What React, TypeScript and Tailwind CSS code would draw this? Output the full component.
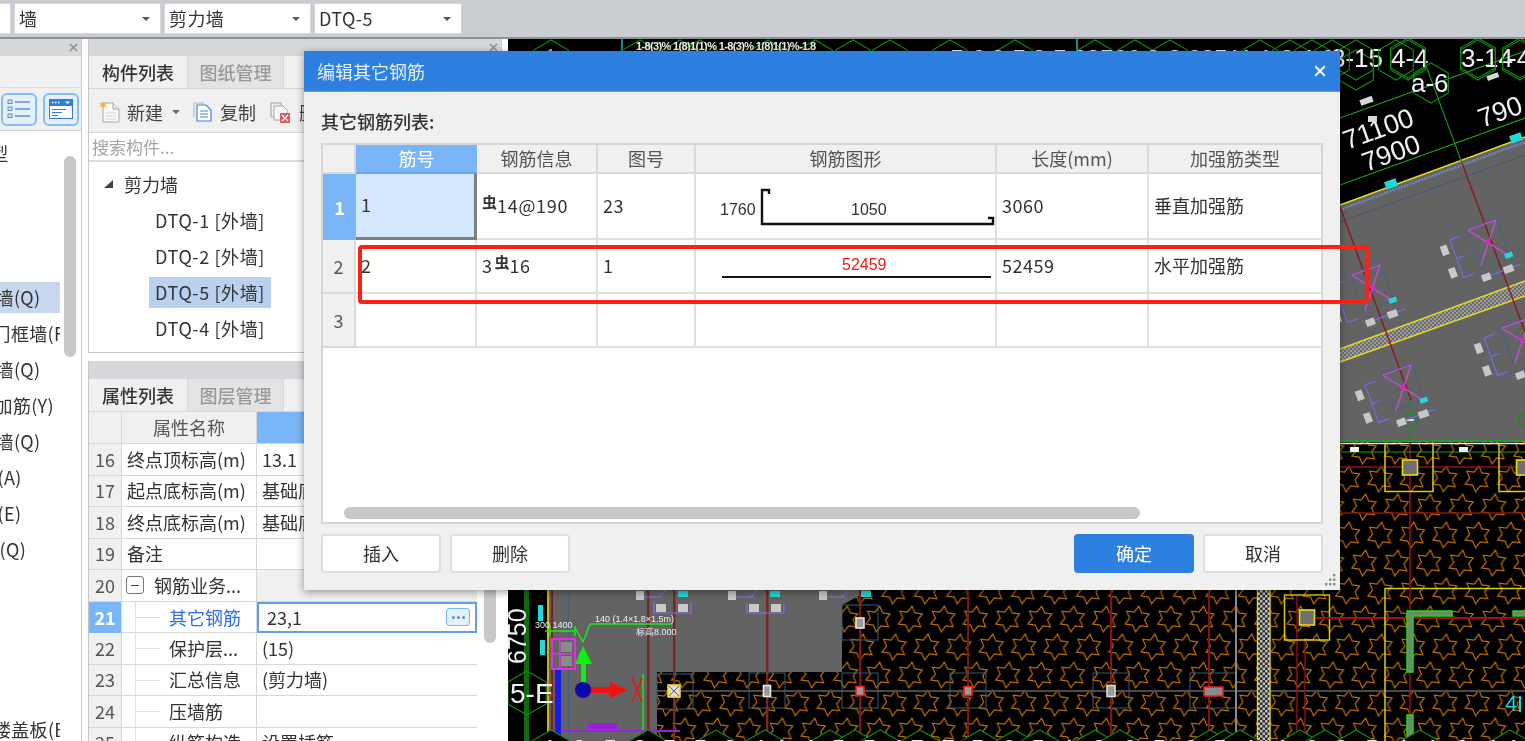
import React from "react";

const font = { fontFamily: '"Noto Sans CJK SC", "Noto Sans", sans-serif' };

function hexPts(cx: number, cy: number, r: number) {
  const pts: string[] = [];
  for (let i = 0; i < 6; i++) {
    const a = (Math.PI / 3) * i + Math.PI / 6;
    pts.push(`${cx + r * Math.cos(a)},${cy + r * Math.sin(a)}`);
  }
  return pts.join(" ");
}

function starPts(cx: number, cy: number, R: number, r: number) {
  const pts: string[] = [];
  for (let i = 0; i < 12; i++) {
    const a = (Math.PI / 6) * i - Math.PI / 2 + 0.12;
    const d = i % 2 === 0 ? R : r;
    pts.push(`${(cx + d * Math.cos(a)).toFixed(1)},${(cy + d * Math.sin(a)).toFixed(1)}`);
  }
  return pts.join(" ");
}

function Brace({ x, y }: { x: number; y: number }) {
  return (
    <g transform={`translate(${x} ${y}) rotate(-20)`}>
      <rect x={-16} y={-19} width={32} height={38} fill="none" stroke="#47627f" strokeWidth={1} />
      <path d="M-15 -18 L15 -18 L-15 20 M-15 -18 L15 20" fill="none" stroke="#c24fd6" strokeWidth={1.3} />
      <circle cx={0} cy={0} r={2.5} fill="#e020d0" />
      <path d="M-24 -15 L-35 -15 L-35 25 L-24 25 M-35 5 L-26 5" fill="none" stroke="#6d6de0" strokeWidth={1.3} />
      <path d="M-20 32 L24 32" fill="none" stroke="#6d6de0" strokeWidth={1.3} />
      <rect x={-47} y={-12} width={7} height={10} fill="#c8c8c8" />
      <rect x={-47} y={12} width={7} height={10} fill="#c8c8c8" />
      <rect x={-18} y={29} width={9} height={7} fill="#c8c8c8" />
      <rect x={5} y={29} width={10} height={7} fill="#c8c8c8" />
      <rect x={11} y={17} width={8} height={5} fill="#25d8d8" />
    </g>
  );
}

function ColBox({ x, y, inner, w = 9, h = 11 }: { x: number; y: number; inner: string; w?: number; h?: number }) {
  return (
    <g>
      <rect x={x - 18} y={y - 18} width={36} height={35} fill="none" stroke="#3a5a78" strokeWidth={1} />
      <rect x={x - w / 2} y={y - h / 2} width={w} height={h} fill="#9a9a9a" stroke={inner} strokeWidth={1.6} />
    </g>
  );
}

function Canvas() {
  const topHex = [551, 640, 680, 700, 768, 815, 853, 890, 950, 1015, 1095, 1135, 1170, 1260, 1290, 1312, 1332, 1356, 1408, 1396, 1478, 1520];
  const botHex = [551, 648, 716, 765, 830, 855, 880, 920, 980, 1015, 1040, 1095, 1120, 1210, 1225, 1240, 1300, 1325, 1356, 1420, 1510];
  return (
    <svg viewBox="508 39 1017 702" className="block w-full h-full">
      <defs>
        <pattern id="stars" patternUnits="userSpaceOnUse" x={1364} y={521} width={32.4} height={56}>
          {[[16, 14], [0, 42], [32.4, 42]].map(([a, b], i) => (
            <polygon key={i} points={starPts(a, b, 13, 7.6)} fill="none" stroke="#c06e00" strokeWidth={1.2} />
          ))}
        </pattern>
        <pattern id="check" patternUnits="userSpaceOnUse" width={5} height={5}>
          <rect width={5} height={5} fill="#2a2a2a" />
          <rect width={2.5} height={2.5} fill="#c0c0c0" />
          <rect x={2.5} y={2.5} width={2.5} height={2.5} fill="#c0c0c0" />
        </pattern>
        <pattern id="band" patternUnits="userSpaceOnUse" width={4} height={4}>
          <rect width={4} height={4} fill="#6c6c6c" />
          <rect width={2} height={2} fill="#9c9c9c" />
          <rect x={2} y={2} width={2} height={2} fill="#9c9c9c" />
        </pattern>
      </defs>
      <rect x={508} y={39} width={1017} height={702} fill="#000" />

      {/* star fill */}
      <rect x={842} y={440} width={683} height={301} fill="url(#stars)" />
      <rect x={657} y={672} width={185} height={69} fill="url(#stars)" />

      {/* gray slab, lower left */}
      <path d="M549 580 L842 580 L842 672 L657 672 L657 741 L549 741 Z" fill="#636363" />
      <path d="M842 605 L842 590 L870 590 Z" fill="#636363" />

      {/* gray slab, upper right */}
      <path d="M1340 205 L1525 137 L1525 441 L1340 441 Z" fill="#636363" />
      <path d="M1340 349 L1525 281 L1525 296 L1340 362 Z" fill="url(#band)" />
      <path d="M1340 349 L1525 281 M1340 362 L1525 296" stroke="#e6d820" strokeWidth={1.5} fill="none" />
      <path d="M1340 205 L1525 137" stroke="#e6d820" strokeWidth={1.6} fill="none" />
      <path d="M1342 209 L1525 142" stroke="#6f86b8" strokeWidth={2.4} strokeDasharray="2 1" fill="none" />
      <path d="M1340 222 L1525 155" stroke="#3d5878" strokeWidth={1} fill="none" />

      {/* dimension lines and top right text */}
      <path d="M1340 118 L1525 51 M1340 185 L1525 118" stroke="#1f9a1f" strokeWidth={1.2} fill="none" />
      <path d="M1425 63 L1462 163" stroke="#1f8a1f" strokeWidth={1.2} fill="none" />
      <path d="M1462 163 L1525 332 M1340 207 L1411 400" stroke="#8c1c1c" strokeWidth={1.5} fill="none" />
      <path d="M1410 400 L1410 441" stroke="#1f8a1f" strokeWidth={1.2} fill="none" />
      <circle cx={1410} cy={420} r={6.5} fill="#636363" stroke="#1f8a1f" strokeWidth={1.6} />
      <rect x={1406} y={419} width={8} height={2} fill="#ddd" />
      <circle cx={1525} cy={420} r={6.5} fill="none" stroke="#1f8a1f" strokeWidth={1.6} />
      <polyline points="1340,441 1525,441" stroke="#2a9a2a" strokeWidth={2} fill="none" />
      <polyline points="1340,443.5 1525,443.5" stroke="#e8e8e8" strokeWidth={1.5} fill="none" />

      <Brace x={1488} y={242} />
      <Brace x={1372} y={287} />
      <Brace x={1403} y={387} />
      <Brace x={1522} y={340} />

      <rect x={1385} y={180} width={12} height={8} fill="#20d8d8" transform="rotate(-20 1391 184)" />
      <rect x={1510} y={134} width={12} height={8} fill="#20d8d8" transform="rotate(-20 1516 138)" />

      {[[1356, 70], [1408, 58], [1478, 58], [1520, 58], [1431, 83]].map(([x, y], i) => (
        <polygon key={i} points={hexPts(x, y, 20)} fill="none" stroke="#0f8a0f" strokeWidth={1.2} />
      ))}
      <g fill="#f2f2f2" style={{ fontFamily: '"Liberation Sans", sans-serif' }} fontSize={26}>
        <text x={1331} y={67}>3-15</text>
        <text x={1391} y={67}>4-4</text>
        <text x={1461} y={67}>3-14</text>
        <text x={1508} y={67}>-4</text>
        <text x={1411} y={92}>a-6</text>
        <text x={1347} y={150} transform="rotate(-20 1347 150)" fontSize={27}>71100</text>
        <text x={1366} y={172} transform="rotate(-20 1366 172)" fontSize={27}>7900</text>
        <text x={1482} y={128} transform="rotate(-20 1482 128)" fontSize={27}>790</text>
      </g>
      <g fill="#d8d8d8">
        <rect x={1360} y={98} width={13} height={6} transform="rotate(-20 1366 101)" />
        <rect x={1368} y={116} width={9} height={6} />
        <rect x={1487} y={74} width={12} height={5} transform="rotate(-20 1493 77)" />
      </g>

      {/* top strip */}
      <rect x={621} y={39} width={2} height={14} fill="#168f96" />
      <rect x={1076} y={39} width={2} height={14} fill="#168f96" />
      {topHex.map((x, i) => (
        <polygon key={i} points={hexPts(x, 60, 20)} fill="none" stroke="#0f8a0f" strokeWidth={1.2} />
      ))}
      <text x={636} y={50} fill="#f0f0f0" fontSize={11} fontWeight={700} style={{ fontFamily: '"Liberation Sans", sans-serif' }} textLength={180}>
        1-8(3)% 1(8)1(1)% 1-8(3)% 1(8)1(1)%-1.8
      </text>
      <text x={547} y={59} fill="#ddd" fontSize={14} style={{ fontFamily: '"Liberation Sans", sans-serif' }}>1</text>
      <text x={950} y={68} fill="#eee" fontSize={26} style={{ fontFamily: '"Liberation Sans", sans-serif' }} textLength={385}>
        5-6 3-5 2-5 63566 3-2 63511 1-3 4-6
      </text>

      {/* lower left */}
      <rect x={524} y={560} width={5} height={181} fill="#0d6a0d" />
      <rect x={547} y={560} width={2} height={181} fill="#c4b41c" />
      <rect x={551} y={580} width={2} height={161} fill="#7c2020" />
      <rect x={568} y={580} width={1} height={161} fill="#43617f" />
      {[648, 674, 767, 860].map((x) => (
        <rect key={x} x={x - 1} y={580} width={2.4} height={161} fill="#7c2525" />
      ))}
      <rect x={552} y={639} width={23} height={30} fill="none" stroke="#e030e0" strokeWidth={2} />
      <rect x={559} y={639} width={1.6} height={30} fill="#e030e0" />
      <rect x={552} y={653} width={23} height={1.6} fill="#e030e0" />
      <rect x={561} y={642} width={11} height={10} fill="#8a8a8a" />
      <rect x={561} y={656} width={11} height={10} fill="#8a8a8a" />
      <rect x={555} y={670} width={6} height={71} fill="#1a1ae6" />
      <path d="M545 631 L575 631 M550 626 L550 636 M575 626 L575 636 M583 642 L575 628 M583 642 L590 624 L672 624" stroke="#1ee61e" strokeWidth={1.5} fill="none" />
      <path d="M643 674 L643 733" stroke="#1ee61e" strokeWidth={1.5} fill="none" />
      <rect x={581} y={660} width={5} height={25} fill="#10f010" />
      <polygon points="583,646 575,664 592,664" fill="#10f010" />
      <rect x={590} y={687} width={22} height={6} fill="#f01010" />
      <polygon points="628,690 610,682 610,698" fill="#f01010" />
      <circle cx={583} cy={690} r={8} fill="#0a0aa8" />
      <path d="M632 678 L642 702 M642 678 L632 702" stroke="#f01010" strokeWidth={1.5} fill="none" />
      <path d="M562 731 L680 731" stroke="#9a20d8" strokeWidth={1.8} fill="none" />
      <rect x={588} y={723} width={29} height={6} fill="#9a20d8" />
      <polygon points={hexPts(527, 693, 22)} fill="none" stroke="#0f8a0f" strokeWidth={1.2} />
      <g fill="#f0f0f0" style={{ fontFamily: '"Liberation Sans", sans-serif' }}>
        <text x={510} y={703} fontSize={28}>5-E</text>
        <text x={526} y={664} fontSize={25} transform="rotate(-90 526 664)">6750</text>
        <text x={535} y={628} fontSize={9}>300 1400</text>
        <text x={595} y={622} fontSize={9}>140 (1.4×1.8×1.5m)</text>
        <text x={636} y={635} fontSize={9}>标高8.000</text>
      </g>
      <rect x={538} y={605} width={5} height={16} fill="#20d8d8" />
      <rect x={540} y={640} width={5} height={15} fill="#20d8d8" />
      <path d="M548 682 L556 682 M548 695 L556 695" stroke="#f02020" strokeWidth={1} />

      {/* small brace fragments under dialog */}
      {[640, 732, 823].map((x) => (
        <g key={x}>
          <rect x={x - 4} y={591} width={8} height={9} fill="#c8c8c8" />
          <path d={`M${x + 4} 597 L${x + 22} 597 M${x + 18} 597 L${x + 26} 590`} stroke="#8a70e0" strokeWidth={1} fill="none" />
          <rect x={x + 38} y={591} width={10} height={6} fill="#25d8d8" />
        </g>
      ))}
      {[654, 747].map((x) => (
        <g key={x}>
          <path d={`M${x} 613 L${x + 37} 613 M${x} 603 L${x} 613 M${x + 37} 603 L${x + 37} 613`} stroke="#8a70e0" strokeWidth={1.2} fill="none" />
          <rect x={x + 2} y={604} width={10} height={8} fill="#c8c8c8" />
          <rect x={x + 24} y={604} width={10} height={8} fill="#c8c8c8" />
        </g>
      ))}

      {/* column boxes */}
      <path d="M657 691 L1525 691" stroke="#4a4a4a" strokeWidth={2} fill="none" />
      <rect x={859} y={590} width={2} height={151} fill="#7c1515" />
      <rect x={967} y={590} width={2} height={151} fill="#7c1515" />
      <rect x={1110} y={590} width={2} height={151} fill="#8c1010" />
      <rect x={1208} y={590} width={2} height={151} fill="#8c1010" />
      <g>
        <rect x={657} y={674} width={36} height={35} fill="none" stroke="#3a5a78" />
        <rect x={668} y={685} width={12} height={12} fill="#ddd" stroke="#e6e020" strokeWidth={1.6} />
        <path d="M669 686 L679 696 M679 686 L669 696" stroke="#666" strokeWidth={1} />
      </g>
      <ColBox x={767} y={691} inner="#e8e8e8" w={7} h={11} />
      <ColBox x={860} y={691} inner="#ee1c1c" w={8} h={9} />
      <ColBox x={968} y={691} inner="#ee1c1c" w={8} h={9} />
      <ColBox x={860} y={623} inner="#e8e8e8" w={8} h={10} />
      <ColBox x={1111} y={691} inner="#dcdcdc" w={8} h={11} />
      <rect x={1190} y={673} width={46} height={35} fill="none" stroke="#3a5a78" />
      <rect x={1204} y={687} width={19} height={9} fill="#8a8a8a" stroke="#ee1c1c" strokeWidth={1.5} />
      <rect x={1235} y={590} width={2} height={151} fill="#8a8a8a" />

      {/* hatched wall */}
      <rect x={1258} y={590} width={12} height={151} fill="url(#check)" />
      <path d="M1257.5 590 L1257.5 741 M1270 590 L1270 741" stroke="#e6d820" strokeWidth={1.4} fill="none" />

      {/* yellow boxes and reinforcement */}
      <path d="M1297 595 L1297 741 M1305 640 L1305 741" stroke="#8c1010" strokeWidth={1.5} fill="none" />
      <rect x={1284.5} y={595} width={45} height={45} fill="none" stroke="#d8cc10" strokeWidth={1.5} />
      <rect x={1299.5} y={610} width={15} height={15} fill="#707070" stroke="#e6e010" strokeWidth={1.6} />
      <path d="M1315 618 L1525 618" stroke="#a01010" strokeWidth={2} fill="none" />
      <path d="M1385 741 L1385 588.5 L1525 588.5" stroke="#d8d010" strokeWidth={1.5} fill="none" />
      <path d="M1410 443 L1410 741" stroke="#9a1010" strokeWidth={1.5} fill="none" />
      <path d="M1407 672 L1407 611 L1452 611 L1452 616 L1413 616 L1413 672 Z" fill="#6a8a6a" stroke="#18e018" strokeWidth={1.4} />
      <rect x={1513} y={611} width={14} height={5} fill="#6a8a6a" stroke="#18e018" strokeWidth={1.4} />
      <rect x={1407} y={715} width={6} height={28} fill="#6a8a6a" stroke="#18e018" strokeWidth={1.4} />
      <text x={1505} y={711} fill="#10d8e8" fontSize={22} style={{ fontFamily: '"Liberation Sans", sans-serif' }}>4</text>
      <rect x={1519} y={696} width={2} height={16} fill="#10d8e8" />

      <path d="M1340 452 L1525 452" stroke="#1c9a1c" strokeWidth={1.2} fill="none" />
      <path d="M1340 467 L1525 467 M1340 513 L1525 513" stroke="#8c1010" strokeWidth={1.4} fill="none" />
      <rect x={1350} y={447} width={9} height={5} fill="#eee" />
      <rect x={1459} y={447} width={9} height={5} fill="#eee" />
      <path d="M1385 444 L1385 491.5 L1433 491.5 L1433 444 M1499 444 L1499 491.5 L1525 491.5" stroke="#d8d010" strokeWidth={1.5} fill="none" />
      <rect x={1402.5} y={460} width={15} height={15} fill="#707070" stroke="#e6e010" strokeWidth={1.6} />
      <rect x={1516.5} y={460} width={15} height={15} fill="#707070" stroke="#e6e010" strokeWidth={1.6} />

      {/* bottom strip */}
      {botHex.map((x, i) => (
        <polygon key={i} points={hexPts(x, 752, 22)} fill="#000" stroke="#0f8a0f" strokeWidth={1.2} />
      ))}
      <text x={543} y={757} fill="#eee" fontSize={24} style={{ fontFamily: '"Liberation Sans", sans-serif' }} textLength={975}>
        1 2-5 3 5-5 3-14 4 5-5 17-7 5-6 5-1 3-6 5-6 5-1 4-6 3-5 4-1 3-14
      </text>
    </svg>
  );
}

function CloseX({ className }: { className: string }) {
  return (
    <svg viewBox="0 0 10 10" className={className}>
      <path d="M1 1 L9 9 M9 1 L1 9" stroke="currentColor" strokeWidth={1.6} fill="none" />
    </svg>
  );
}

function PanelHeader() {
  return (
    <div className="h-[17px] bg-[#d6d7da] flex items-center justify-end pr-[3px] text-[#8d8d8d] shrink-0">
      <CloseX className="w-[9px] h-[9px]" />
    </div>
  );
}

function Combo({ w, text }: { w: string; text: string }) {
  return (
    <div className={`${w} h-[31px] bg-white border border-[#d4d6da] flex items-center pl-[4px] pr-[10px] justify-between text-[#333] text-[18px] tracking-[0.4px] shrink-0`}>
      <span>{text}</span>
      <span className="w-0 h-0 border-x-[4px] border-x-transparent border-t-[4px] border-t-[#555]" />
    </div>
  );
}

const leftList: [string, string][] = [
  ["墙型", "-ml-[28px]"],
  ["", ""],
  ["", ""],
  ["", ""],
  ["剪力墙(Q)", "-ml-[41px]"],
  ["人防门框墙(F)", "-ml-[44px]"],
  ["砌体墙(Q)", "-ml-[41px]"],
  ["砌体加筋(Y)", "-ml-[42px]"],
  ["保温墙(Q)", "-ml-[41px]"],
  ["暗梁(A)", "-ml-[39px]"],
  ["飘窗(E)", "-ml-[39px]"],
  ["幕墙(Q)", "-ml-[37px]"],
  ["", ""],
  ["", ""],
  ["", ""],
  ["", ""],
  ["楼盖板(B)", "-ml-[7px]"],
];

function LeftPanel() {
  return (
    <div className="w-[82px] shrink-0 flex flex-col border-r border-[#c8c8c8] bg-white">
      <PanelHeader />
      <div className="h-[32px] bg-[#f0f0f0] border-b border-[#dcdcdc] shrink-0" />
      <div className="h-[43px] bg-[#f0f0f0] border-b border-[#d4d4d4] flex items-center gap-[6px] pl-[1px] shrink-0">
        <div className="w-[36px] h-[33px] rounded-[6px] border-2 border-[#86bdf6] bg-[#e6f0fb] flex items-center justify-center">
          <svg viewBox="0 0 26 22" className="w-[26px] h-[22px]">
            <g fill="#cfe3f8" stroke="#5a8fd0" strokeWidth={1}>
              <rect x={2} y={2} width={4} height={3.5} />
              <rect x={2} y={9} width={4} height={3.5} />
              <rect x={2} y={16} width={4} height={3.5} />
            </g>
            <path d="M9 4 H24 M9 11 H24 M9 18 H24" stroke="#5f93d2" strokeWidth={1.4} />
          </svg>
        </div>
        <div className="w-[36px] h-[33px] rounded-[6px] border-2 border-[#86bdf6] bg-[#e6f0fb] flex items-center justify-center">
          <svg viewBox="0 0 24 20" className="w-[24px] h-[20px]">
            <rect x={0.5} y={0.5} width={23} height={19} fill="#fff" stroke="#2f7ee0" />
            <rect x={0.5} y={0.5} width={23} height={6.5} fill="#2f7ee0" />
            <path d="M3 3.5 H4.5 M6 3.5 H7.5 M9 3.5 H10.5" stroke="#fff" strokeWidth={1.6} />
            <path d="M16 2.5 H21 L18.5 5 Z" fill="#fff" />
            <path d="M3 10.5 H17 M3 13.5 H13 M3 16.5 H9" stroke="#2f7ee0" strokeWidth={1.1} />
          </svg>
        </div>
      </div>
      <div className="flex-1 min-h-0 relative overflow-hidden pt-[4px]">
        <div className="w-[60px] overflow-hidden text-[18px] text-[#333]">
          {leftList.map(([t, ml], i) => (
            <div key={i} className="h-[36px] flex items-center">
              {t && (
                <div className={`w-[60px] h-[31px] flex items-center overflow-hidden ${i === 4 ? "bg-[#c6d7ee]" : ""}`}>
                  <span className={`whitespace-nowrap tracking-[0.3px] ${ml}`}>{t}</span>
                </div>
              )}
            </div>
          ))}
        </div>
        <div className="absolute left-[64px] top-[25px] w-[12px] h-[201px] rounded-full bg-[#c8c8c8]" />
      </div>
    </div>
  );
}

function Tabs({ a, b }: { a: string; b: string }) {
  return (
    <div className="h-[33px] bg-[#f0f0f0] border-b border-[#d6d6d6] flex items-stretch pl-[1px] shrink-0 text-[18px]">
      <div className="w-[96px] flex items-center justify-center text-[#333] font-medium">{a}</div>
      <div className="w-[97px] ml-[1px] flex items-center justify-center bg-[#e3e3e3] border-x border-[#d8d8d8] text-[#9a9a9a] font-medium">{b}</div>
    </div>
  );
}

function Toolbar() {
  return (
    <div className="h-[44px] pt-[3px] bg-[#f0f0f0] border-b border-[#d6d6d6] flex items-center text-[18px] text-[#444] shrink-0 pl-[10px]">
      <svg viewBox="0 0 21 22" className="w-[21px] h-[22px]">
        <path d="M4 2 H14 L20 8 V21 H4 Z" fill="#fafafa" stroke="#a8a8a8" />
        <path d="M14 2 V8 H20" fill="#e8e8e8" stroke="#a8a8a8" />
        <path d="M7 12 H17 M7 15 H17 M7 18 H17" stroke="#d4d4d4" />
        <path d="M4 0 L5 2.6 L8 2 L6 4 L8 6 L5 5.5 L4 8 L3 5.5 L0 6 L2 4 L0 2 L3 2.6 Z" fill="#f6b23c" />
      </svg>
      <span className="ml-[7px]">新建</span>
      <span className="ml-[9px] w-0 h-0 border-x-[4px] border-x-transparent border-t-[4px] border-t-[#666]" />
      <svg viewBox="0 0 19 20" className="ml-[13px] w-[19px] h-[20px]">
        <path d="M1 1 H11 M1 1 V15" stroke="#b0b0b0" fill="none" />
        <path d="M4 3 H13 L18 8 V19 H4 Z" fill="#fff" stroke="#3f86d8" strokeWidth={1.2} />
        <path d="M7 9 H15 M7 12 H15 M7 15 H15" stroke="#3f86d8" />
      </svg>
      <span className="ml-[8px]">复制</span>
      <svg viewBox="0 0 21 21" className="ml-[14px] w-[21px] h-[21px]">
        <path d="M1 1 H11 V3 M1 1 V15 H4" stroke="#a0a0a0" fill="none" />
        <path d="M4 4 H13 L17 8 V12 M4 4 V18 H10" fill="#fff" stroke="#a0a0a0" />
        <rect x={10} y={11} width={10} height={10} fill="#e35a5a" />
        <path d="M12 13 L18 19 M18 13 L12 19" stroke="#fff" strokeWidth={1.2} />
      </svg>
      <span className="ml-[8px]">删除</span>
    </div>
  );
}

function MidPanel() {
  const items = ["DTQ-1 [外墙]", "DTQ-2 [外墙]", "DTQ-5 [外墙]", "DTQ-4 [外墙]"];
  return (
    <div className="w-[414px] shrink-0 flex flex-col bg-white overflow-hidden">
      <div className="h-[314px] flex flex-col border-x border-b border-[#c8c8c8] shrink-0">
        <PanelHeader />
        <Tabs a="构件列表" b="图纸管理" />
        <Toolbar />
        <div className="h-[29px] border-b-2 border-[#dcdcdc] flex items-center pl-[3px] text-[17px] text-[#a4a4a4] shrink-0">搜索构件...</div>
        <div className="flex-1 pt-[4px] text-[18px] text-[#333]">
          <div className="h-[36px] flex items-center pl-[15px]">
            <span className="w-0 h-0 border-l-[9px] border-l-transparent border-b-[8px] border-b-[#444]" />
            <span className="ml-[11px]">剪力墙</span>
          </div>
          {items.map((t, i) => (
            <div key={t} className="h-[36px] flex items-center pl-[60px]">
              <span className={`h-[31px] flex items-center px-[6px] whitespace-nowrap tracking-[0.6px] ${i === 2 ? "bg-[#b9d0ef]" : ""}`}>{t}</span>
            </div>
          ))}
        </div>
      </div>
      <div className="h-[8px] shrink-0" />
      <div className="flex-1 min-h-0 flex flex-col border-l border-[#c8c8c8] relative">
        <div className="h-[18px] bg-[#d6d7da] shrink-0" />
        <Tabs a="属性列表" b="图层管理" />
        <PropTable />
        <div className="absolute left-[395px] top-[60px] w-[12px] h-[222px] rounded-full bg-[#c8c8c8]" />
      </div>
    </div>
  );
}

type Row = { n: number; name: string; val?: string; kind?: "child" | "group" | "sel" };
const rows: Row[] = [
  { n: 16, name: "终点顶标高(m)", val: "13.1" },
  { n: 17, name: "起点底标高(m)", val: "基础底标高" },
  { n: 18, name: "终点底标高(m)", val: "基础底标高" },
  { n: 19, name: "备注" },
  { n: 20, name: "钢筋业务...", kind: "group" },
  { n: 21, name: "其它钢筋", val: "23,1", kind: "sel" },
  { n: 22, name: "保护层...", val: "(15)", kind: "child" },
  { n: 23, name: "汇总信息", val: "(剪力墙)", kind: "child" },
  { n: 24, name: "压墙筋", kind: "child" },
  { n: 25, name: "纵筋构造", val: "设置插筋", kind: "child" },
];

function PropTable() {
  return (
    <div className="w-[388px] text-[18px] text-[#333] bg-white">
      <div className="grid grid-cols-[33px_135px_220px] h-[32px] border-b border-[#d8d8d8]">
        <div className="bg-[#f0f0f0] border-r border-[#d8d8d8]" />
        <div className="bg-[#f0f0f0] border-r border-[#d8d8d8] flex items-center justify-center text-[#555]">属性名称</div>
        <div className="bg-[#7ab6f7]" />
      </div>
      {rows.map((r) => {
        const child = r.kind === "child" || r.kind === "sel";
        return (
          <div key={r.n} className="grid grid-cols-[33px_135px_220px] h-[31.5px] border-b border-[#d8d8d8]">
            <div className={`flex items-center justify-center border-r border-[#d8d8d8] ${r.kind === "sel" ? "bg-[#7ab6f7] text-white font-bold" : "bg-[#f0f0f0] text-[#555]"}`}>{r.n}</div>
            <div className="relative flex items-center border-r border-[#d8d8d8] pl-[5px] whitespace-nowrap overflow-hidden">
              {r.kind === "group" && (
                <span className="w-[18px] h-[18px] border border-[#777] rounded-[3px] flex items-center justify-center mr-[10px] -ml-[1px] shrink-0">
                  <span className="w-[8px] h-[1.5px] bg-[#444]" />
                </span>
              )}
              {child && (
                <>
                  <span className="absolute left-[13px] top-0 bottom-0 w-px bg-[#e2e2e2]" />
                  <span className="absolute left-[14px] top-[15px] w-[24px] h-px bg-[#e2e2e2]" />
                </>
              )}
              <span className={`${child ? "ml-[42px]" : ""} ${r.kind === "sel" ? "text-[#2f6fe6]" : ""}`}>{r.name}</span>
            </div>
            {r.kind === "sel" ? (
              <div className="border-2 border-[#5ca0ec] flex items-center justify-between pl-[8px] pr-[5px]">
                <span>{r.val}</span>
                <span className="w-[24px] h-[18px] border border-[#7ab6f7] rounded-[3px] bg-[#e3f0fd] flex items-center justify-center gap-[2px]">
                  <i className="w-[3px] h-[3px] rounded-full bg-[#5c8fd0]" />
                  <i className="w-[3px] h-[3px] rounded-full bg-[#5c8fd0]" />
                  <i className="w-[3px] h-[3px] rounded-full bg-[#5c8fd0]" />
                </span>
              </div>
            ) : (
              <div className={`flex items-center pl-[5px] whitespace-nowrap overflow-hidden ${r.kind === "group" ? "bg-[#f0f0f0]" : ""}`}>{r.val}</div>
            )}
          </div>
        );
      })}
    </div>
  );
}

const liberation = { fontFamily: '"Liberation Sans", sans-serif' };

function Cell({ children, className = "" }: { children?: React.ReactNode; className?: string }) {
  return <div className={`border-r-2 border-b-2 border-[#e0e0e0] flex items-center pl-[5px] pb-[2px] whitespace-nowrap ${className}`}>{children}</div>;
}

function Bar({ children }: { children: React.ReactNode }) {
  return <span className="text-[15px] font-bold leading-none -translate-y-[4px] inline-block tracking-normal">{children}</span>;
}

function RebarTable() {
  const heads = ["钢筋信息", "图号", "钢筋图形", "长度(mm)", "加强筋类型"];
  const gridCols = "grid grid-cols-[33px_121px_121px_98px_301px_152px_174px]";
  return (
    <div className="relative h-[381px] border-2 border-[#d6d6d6] bg-white text-[18px] text-[#333] overflow-hidden">
      <div className={`${gridCols} h-[29px]`}>
        <div className="bg-[#f0f0f0] border-r-2 border-b-2 border-[#dadada]" />
        <div className="bg-[#7ab6f7] text-white flex items-center justify-center border-b-2 border-[#6aa8ea]">筋号</div>
        {heads.map((h) => (
          <div key={h} className="bg-[#f0f0f0] border-r-2 border-b-2 border-[#dadada] flex items-center justify-center text-[#555]">{h}</div>
        ))}
      </div>
      <div className={`${gridCols} h-[66px]`}>
        <div className="bg-[#7ab6f7] text-white font-bold flex items-center justify-center">1</div>
        <div className="bg-[#d4e8fd] border-r-[3px] border-b-[3px] border-[#7f7f7f] flex items-center pl-[5px] pb-[2px]">1</div>
        <Cell className="tracking-[0.7px]"><Bar>虫</Bar>14@190</Cell>
        <Cell className="tracking-[0.5px]">23</Cell>
        <Cell className="!pl-0 !pb-0">
          <svg viewBox="696 174 299 64" className="w-[299px] h-[64px] block">
            <path d="M769 194 V190 H762 V224 H993 V218 H988" fill="none" stroke="#111" strokeWidth={2.4} />
            <text x={720} y={215} fontSize={16} fill="#333" style={liberation}>1760</text>
            <text x={851} y={215} fontSize={16} fill="#333" style={liberation}>1050</text>
          </svg>
        </Cell>
        <Cell className="tracking-[0.5px]">3060</Cell>
        <Cell>垂直加强筋</Cell>
      </div>
      <div className={`${gridCols} h-[54px]`}>
        <div className="bg-[#f0f0f0] border-r-2 border-b-2 border-[#dadada] flex items-center justify-center text-[#555]">2</div>
        <Cell>2</Cell>
        <Cell className="tracking-[0.5px]"><span className="mr-[2px]">3</span><Bar>虫</Bar>16</Cell>
        <Cell>1</Cell>
        <Cell className="!pl-0 !pb-0">
          <svg viewBox="696 240 299 52" className="w-[299px] h-[52px] block">
            <path d="M722 277 H991" fill="none" stroke="#111" strokeWidth={2.2} />
            <text x={842} y={270} fontSize={16} fill="#f01818" style={liberation}>52459</text>
          </svg>
        </Cell>
        <Cell className="tracking-[0.5px]">52459</Cell>
        <Cell>水平加强筋</Cell>
      </div>
      <div className={`${gridCols} h-[54px]`}>
        <div className="bg-[#f0f0f0] border-r-2 border-b-2 border-[#dadada] flex items-center justify-center text-[#555]">3</div>
        <Cell /><Cell /><Cell /><Cell /><Cell /><Cell />
      </div>
      <div className="absolute left-[21px] top-[362px] w-[796px] h-[12px] rounded-full bg-[#c8c8c8]" />
    </div>
  );
}

function DlgBtn({ children, primary, className = "" }: { children: string; primary?: boolean; className?: string }) {
  return (
    <div className={`w-[120px] h-[39px] rounded-[4px] flex items-center justify-center text-[18px] ${primary ? "bg-[#2d7fe0] text-white" : "bg-white border-2 border-[#dedede] text-[#333]"} ${className}`}>
      {children}
    </div>
  );
}

function Dialog() {
  return (
    <div className="absolute left-[304px] top-[51px] w-[1036px] h-[539px] bg-[#f0f0f0] shadow-[0_2px_8px_rgba(0,0,0,0.4)] flex flex-col">
      <div className="h-[41px] bg-[#2d7fe0] flex items-center justify-between pl-[13px] pr-[14px] text-white shrink-0 border-b border-[#5a9cea]">
        <span className="text-[18px] text-[#e4efff]">编辑其它钢筋</span>
        <CloseX className="w-[12px] h-[12px]" />
      </div>
      <div className="flex-1 flex flex-col px-[17px]">
        <div className="h-[51px] flex items-center text-[18px] text-[#333] font-medium pt-[7px]">其它钢筋列表:</div>
        <RebarTable />
        <div className="flex mt-[10px]">
          <DlgBtn>插入</DlgBtn>
          <DlgBtn className="ml-[9px]">删除</DlgBtn>
          <div className="flex-1" />
          <DlgBtn primary>确定</DlgBtn>
          <DlgBtn className="ml-[9px]">取消</DlgBtn>
        </div>
      </div>
      <svg viewBox="0 0 12 12" className="absolute right-[4px] bottom-[4px] w-[12px] h-[12px]">
        <g fill="#8a8a8a">
          <rect x={9} y={0} width={2.4} height={2.4} />
          <rect x={5} y={4.5} width={2.4} height={2.4} />
          <rect x={9} y={4.5} width={2.4} height={2.4} />
          <rect x={1} y={9} width={2.4} height={2.4} />
          <rect x={5} y={9} width={2.4} height={2.4} />
          <rect x={9} y={9} width={2.4} height={2.4} />
        </g>
      </svg>
    </div>
  );
}

export default function App() {
  return (
    <div style={font} className="relative w-[1525px] h-[741px] overflow-hidden bg-white flex flex-col blur-[0.5px]">
      <div className="h-[39px] bg-[#c9ccd1] border-b-2 border-[#8e9195] flex items-start pt-[3px] gap-[3px] shrink-0 -ml-[136px]">
        <Combo w="w-[147px]" text="" />
        <Combo w="w-[147px]" text="墙" />
        <Combo w="w-[147px]" text="剪力墙" />
        <Combo w="w-[148px]" text="DTQ-5" />
      </div>
      <div className="flex-1 min-h-0 flex">
        <LeftPanel />
        <div className="w-[6px] shrink-0 bg-white" />
        <MidPanel />
        <div className="w-[6px] shrink-0 bg-white" />
        <div className="flex-1 min-w-0 bg-black">
          <Canvas />
        </div>
      </div>
      <Dialog />
      <div className="absolute left-[358px] top-[245px] w-[1011px] h-[59px] border-[4px] border-[#ff2014] rounded-[4px]" />
    </div>
  );
}
